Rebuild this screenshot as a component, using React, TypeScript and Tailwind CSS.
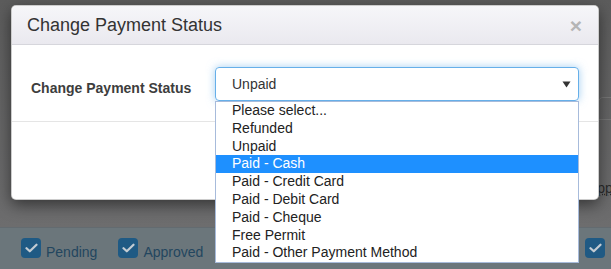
const options = [
  "Please select...",
  "Refunded",
  "Unpaid",
  "Paid - Cash",
  "Paid - Credit Card",
  "Paid - Debit Card",
  "Paid - Cheque",
  "Free Permit",
  "Paid - Other Payment Method",
];

function Check({ label }: { label: string }) {
  return (
    <div className="flex items-start gap-[5px] shrink-0">
      <div className="w-[20px] h-[20px] rounded-[4px] bg-[#1f5a84] flex items-center justify-center">
        <svg width="13" height="10" viewBox="0 0 13 10" fill="none">
          <path d="M1.5 5.2L4.8 8.3L11.5 1.7" stroke="#c3ccd3" strokeWidth="2.2" strokeLinecap="round" strokeLinejoin="round" />
        </svg>
      </div>
      <span className="mt-[6px] text-[14px] leading-[16px] text-[#23465f]">{label}</span>
    </div>
  );
}

export default function App() {
  const selected = "Paid - Cash";

  return (
    <div className="relative w-[611px] h-[269px] overflow-hidden font-['Liberation_Sans',Arial,sans-serif]">
      {/* page behind the backdrop */}
      <div className="flex flex-col h-full">
        <div className="h-[227px] bg-gradient-to-b from-[#5c5c5c] to-[#6d6d6e] flex flex-col items-start pl-[588px] pt-[97px] whitespace-nowrap">
          <div className="ml-[10px] w-[24px] h-[23px] border border-[#767676] rounded-tl-[5px]" />
          <span className="mt-[60px] text-[14px] leading-[16px] text-[#2b2b2b] underline decoration-dotted">Approve</span>
        </div>
        <div className="flex-1 border-t border-[#636b70] bg-[#6b767b] flex items-center pl-[21px] pt-[1px] whitespace-nowrap">
          <Check label="Pending" />
          <div className="ml-[21px]">
            <Check label="Approved" />
          </div>
          <div className="ml-[382px]">
            <Check label="Rejected" />
          </div>
        </div>
      </div>

      {/* modal */}
      <div className="absolute left-[11px] top-[5px] w-[588px] rounded-[5px] border border-black/20 bg-white shadow-[0_5px_15px_rgba(0,0,0,0.5)]">
        <div className="h-[39px] rounded-t-[5px] border-b border-[#d6d6dc] bg-gradient-to-b from-[#f6f6f9] to-[#eae9ef] flex items-center justify-between pl-[15px] pr-[16px]">
          <h4 className="text-[18px] leading-none text-[#333]">Change Payment Status</h4>
          <span className="text-[21px] leading-none font-bold text-[#b5b5b5]">×</span>
        </div>

        <div className="flex items-center px-[19px] pt-[22px] pb-[20px] border-b border-[#e5e5e5]">
          <label className="w-[184px] text-[14px] font-bold text-[#3d3d3d] pt-[8px]">Change Payment Status</label>
          <div className="relative flex-1">
            <div className="h-[34px] rounded-[4px] border border-[#66afe9] shadow-[0_0_8px_rgba(102,175,233,0.6)] flex items-center justify-between pl-[16px] pr-[7px] text-[14px] text-[#333]">
              <span>Unpaid</span>
              <svg width="9" height="7" viewBox="0 0 9 7">
                <path d="M0.5 0.5H8.5L4.5 6.5Z" fill="#333" />
              </svg>
            </div>
            <ul className="absolute left-0 top-full w-full border border-[#a7bbdb] bg-white z-10">
              {options.map((o) => (
                <li
                  key={o}
                  className={
                    o === selected
                      ? "h-[17.8px] leading-[17.8px] pl-[16px] text-[14px] bg-[#1e90ff] text-white"
                      : "h-[17.8px] leading-[17.8px] pl-[16px] text-[14px] text-[#222]"
                  }
                >
                  {o}
                </li>
              ))}
            </ul>
          </div>
        </div>

        <div className="h-[77px]" />
      </div>
    </div>
  );
}
